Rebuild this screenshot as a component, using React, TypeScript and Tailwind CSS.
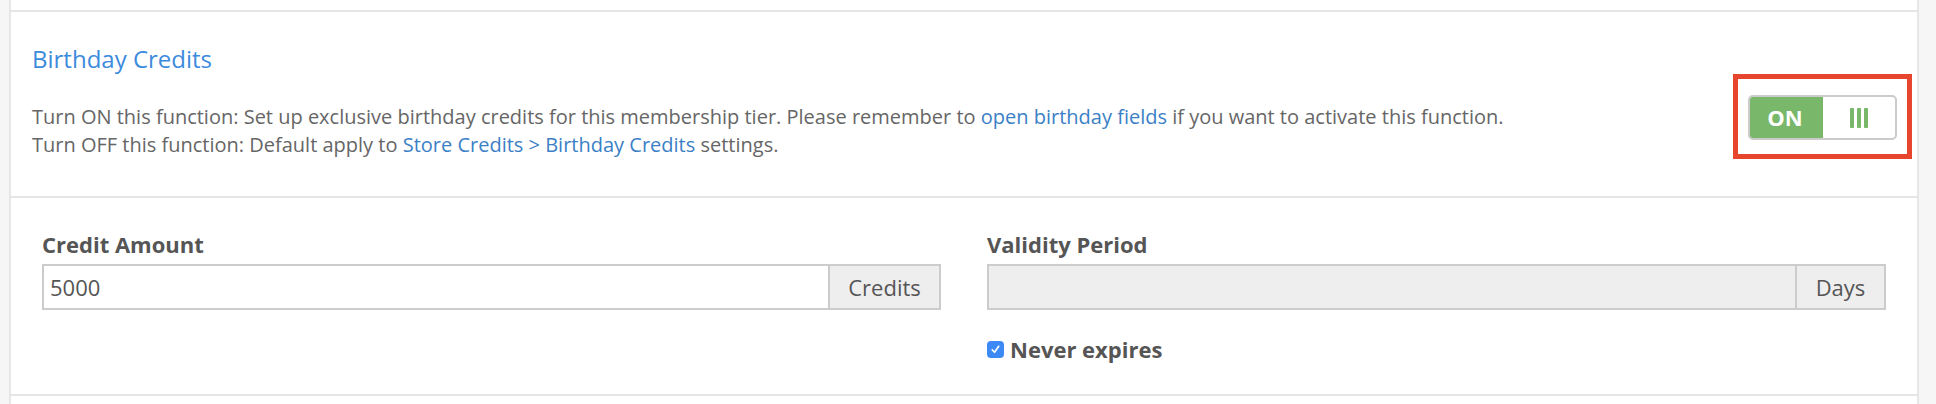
import React from "react";

const Toggle: React.FC = () => {
  return (
    <div className="flex h-[45px] w-[149px] overflow-hidden rounded-[5px] border-2 border-[#cbcbcb] bg-white">
      <div className="flex w-[73px] items-center justify-center bg-[#79b76a] pr-[3px] text-[22px] font-bold text-white">
        ON
      </div>
      <div className="flex flex-1 items-center justify-center gap-[3px]">
        <span className="h-[20px] w-[4px] rounded-[1px] bg-[#79b76a]" />
        <span className="h-[20px] w-[4px] rounded-[1px] bg-[#79b76a]" />
        <span className="h-[20px] w-[4px] rounded-[1px] bg-[#79b76a]" />
      </div>
    </div>
  );
};

const AddonInput: React.FC<{ value?: string; addon: string; disabled?: boolean; addonWidth: string }> = ({
  value,
  addon,
  disabled = false,
  addonWidth,
}) => {
  return (
    <div className="flex h-[46px] border-2 border-[#cccccc]">
      <div
        className={`flex flex-1 items-center pl-[6px] text-[22px] text-[#555] ${
          disabled ? "bg-[#eeeeee]" : "bg-white"
        }`}
      >
        {value}
      </div>
      <div
        className={`flex items-center justify-center border-l-2 border-[#cccccc] bg-[#eeeeee] text-[22px] text-[#555] ${addonWidth}`}
      >
        {addon}
      </div>
    </div>
  );
};

export default function App() {
  return (
    <div className="h-[404px] bg-[#f6f6f6] pl-[9px] pr-[17px] font-['Open_Sans',sans-serif]">
      <div className="h-full border-x-2 border-[#e6e6e6] bg-white">
        <div className="h-[12px] border-b-2 border-[#e6e6e6]" />

        {/* Birthday credits header */}
        <div className="flex h-[186px] border-b-2 border-[#e6e6e6]">
          <div className="flex-1 pl-[21px] pt-[30px]">
            <h3 className="text-[24px] leading-[34px] text-[#3d8bdc]">Birthday Credits</h3>
            <div className="mt-[27px] text-[20px] leading-[28px] text-[#666]">
              <p>
                Turn ON this function: Set up exclusive birthday credits for this membership tier. Please remember to{" "}
                <a className="text-[#3b7fc6]">open birthday fields</a> if you want to activate this function.
              </p>
              <p>
                Turn OFF this function: Default apply to{" "}
                <a className="text-[#3b7fc6]">Store Credits &gt; Birthday Credits</a> settings.
              </p>
            </div>
          </div>
          <div className="mr-[5px] mt-[62px] self-start border-[5px] border-[#e8452e] px-[10px] pb-[14px] pt-[16px]">
            <Toggle />
          </div>
        </div>

        {/* Credit fields */}
        <div className="grid h-[198px] grid-cols-2 gap-x-[46px] border-b-2 border-[#e6e6e6] px-[31px] pt-[32px]">
          <div>
            <label className="block text-[22px] font-bold leading-[28px] text-[#555]">Credit Amount</label>
            <div className="mt-[6px]">
              <AddonInput value="5000" addon="Credits" addonWidth="w-[111px]" />
            </div>
          </div>
          <div>
            <label className="block text-[22px] font-bold leading-[28px] text-[#555]">Validity Period</label>
            <div className="mt-[6px]">
              <AddonInput addon="Days" disabled addonWidth="w-[89px]" />
            </div>
            <div className="mt-[25px] flex h-[28px] items-center gap-[6px]">
              <span className="flex h-[17px] w-[17px] items-center justify-center rounded-[4px] bg-[#3d8af7]">
                <svg viewBox="0 0 12 12" className="h-[11px] w-[11px]" fill="none">
                  <path d="M2.5 6.5 L5 9 L9.5 2.5" stroke="white" strokeWidth="1.8" strokeLinecap="round" strokeLinejoin="round" />
                </svg>
              </span>
              <span className="text-[22px] font-bold text-[#555]">Never expires</span>
            </div>
          </div>
        </div>
      </div>
    </div>
  );
}
